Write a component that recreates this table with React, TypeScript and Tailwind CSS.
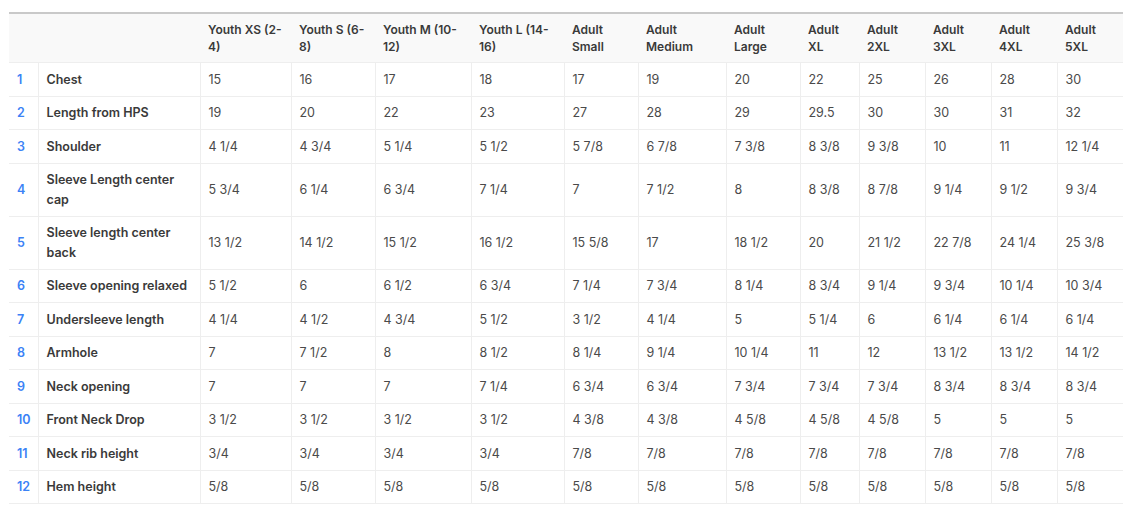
const sizes: [string, string][] = [
  ["Youth XS (2-", "4)"],
  ["Youth S (6-", "8)"],
  ["Youth M (10-", "12)"],
  ["Youth L (14-", "16)"],
  ["Adult", "Small"],
  ["Adult", "Medium"],
  ["Adult", "Large"],
  ["Adult", "XL"],
  ["Adult", "2XL"],
  ["Adult", "3XL"],
  ["Adult", "4XL"],
  ["Adult", "5XL"],
];

const widths = [29, 162, 91, 84, 96, 93, 74, 88, 74, 59, 66, 66, 66, 66];

// label lines are split as in the reference so wrapping doesn't depend on font metrics
const rows: [string[], string[]][] = [
  [["Chest"], ["15", "16", "17", "18", "17", "19", "20", "22", "25", "26", "28", "30"]],
  [["Length from HPS"], ["19", "20", "22", "23", "27", "28", "29", "29.5", "30", "30", "31", "32"]],
  [["Shoulder"], ["4 1/4", "4 3/4", "5 1/4", "5 1/2", "5 7/8", "6 7/8", "7 3/8", "8 3/8", "9 3/8", "10", "11", "12 1/4"]],
  [["Sleeve Length center", "cap"], ["5 3/4", "6 1/4", "6 3/4", "7 1/4", "7", "7 1/2", "8", "8 3/8", "8 7/8", "9 1/4", "9 1/2", "9 3/4"]],
  [["Sleeve length center", "back"], ["13 1/2", "14 1/2", "15 1/2", "16 1/2", "15 5/8", "17", "18 1/2", "20", "21 1/2", "22 7/8", "24 1/4", "25 3/8"]],
  [["Sleeve opening relaxed"], ["5 1/2", "6", "6 1/2", "6 3/4", "7 1/4", "7 3/4", "8 1/4", "8 3/4", "9 1/4", "9 3/4", "10 1/4", "10 3/4"]],
  [["Undersleeve length"], ["4 1/4", "4 1/2", "4 3/4", "5 1/2", "3 1/2", "4 1/4", "5", "5 1/4", "6", "6 1/4", "6 1/4", "6 1/4"]],
  [["Armhole"], ["7", "7 1/2", "8", "8 1/2", "8 1/4", "9 1/4", "10 1/4", "11", "12", "13 1/2", "13 1/2", "14 1/2"]],
  [["Neck opening"], ["7", "7", "7", "7 1/4", "6 3/4", "6 3/4", "7 3/4", "7 3/4", "7 3/4", "8 3/4", "8 3/4", "8 3/4"]],
  [["Front Neck Drop"], ["3 1/2", "3 1/2", "3 1/2", "3 1/2", "4 3/8", "4 3/8", "4 5/8", "4 5/8", "4 5/8", "5", "5", "5"]],
  [["Neck rib height"], ["3/4", "3/4", "3/4", "3/4", "7/8", "7/8", "7/8", "7/8", "7/8", "7/8", "7/8", "7/8"]],
  [["Hem height"], ["5/8", "5/8", "5/8", "5/8", "5/8", "5/8", "5/8", "5/8", "5/8", "5/8", "5/8", "5/8"]],
];

export default function App() {
  return (
    <div className="w-[1128px] h-[529px] bg-white pt-[12px] pl-[9px] font-['Inter',sans-serif]">
      <table className="table-fixed border-collapse w-[1114px] border-t-2 border-[#c9c9c9]">
        <colgroup>
          {widths.map((w, i) => (
            <col key={i} style={{ width: w }} />
          ))}
        </colgroup>
        <thead>
          <tr className="bg-[#f9f9f9] border-b border-[#eeeeee]">
            <th className="px-2 py-[7px]" />
            <th className="px-2 py-[7px]" />
            {sizes.map(([a, b]) => (
              <th
                key={a + b}
                className="px-2 py-[7px] text-left align-middle text-[12px] leading-[17px] font-semibold text-[#3a3a3a] whitespace-nowrap"
              >
                {a}
                <br />
                {b}
              </th>
            ))}
          </tr>
        </thead>
        <tbody>
          {rows.map(([label, values], i) => (
            <tr key={label.join(" ")} className="border-b border-[#eeeeee]">
              <td className="px-2 py-[6.5px] text-[12.5px] leading-[19.5px] font-semibold text-[#3b82f6] border-r border-[#eeeeee]">
                {i + 1}
              </td>
              <td className="px-2 py-[6.5px] text-[12.5px] leading-[19.5px] font-semibold text-[#3a3a3a] border-r border-[#eeeeee] whitespace-nowrap">
                {label.map((line, k) => (
                  <div key={k}>{line}</div>
                ))}
              </td>
              {values.map((v, j) => (
                <td
                  key={j}
                  className={`px-2 py-[6.5px] text-[12.5px] leading-[19.5px] text-[#4a4a4a] ${
                    j < values.length - 1 ? "border-r border-[#eeeeee]" : ""
                  }`}
                >
                  {v}
                </td>
              ))}
            </tr>
          ))}
        </tbody>
      </table>
    </div>
  );
}
